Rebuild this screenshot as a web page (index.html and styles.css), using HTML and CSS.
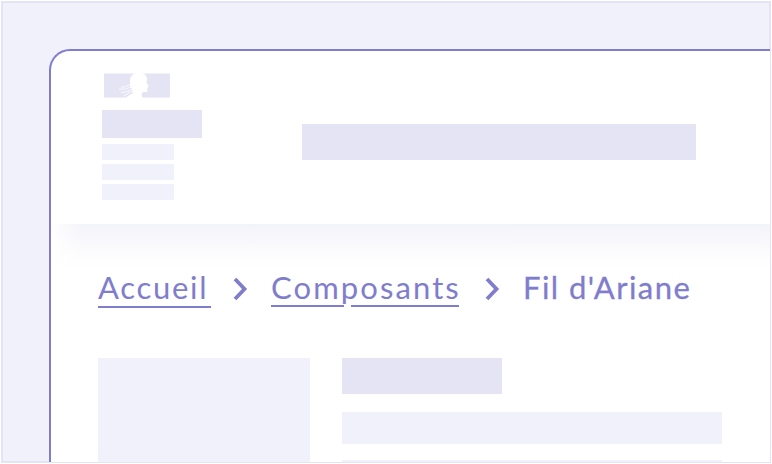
FILE: index.html
```html
<!DOCTYPE html>
<html lang="fr">
<head>
<meta charset="utf-8">
<title>Fil d'Ariane</title>
<link rel="stylesheet" href="styles.css">
</head>
<body>
<div class="frame">
  <main class="window">
    <header class="header">
      <div class="brand">
        <svg class="emblem" width="66" height="26" viewBox="0 0 66 26">
          <path class="flag" d="M0 1.500h66v24H0z"/>
          <path class="bust" d="M26 9C26 4 30 .5 35 .5c4 0 7.500 2.500 8 6l-.5 4 2.300 4-1.500 1 .2 3c-.2 2-2.500 1.200-4.500 1.500L37.500 22l.8 4H22l7-5-1-4-2-3z"/>
          <path class="hair" d="M28 13c-5-1-6 3-11 2M29 15c-5 0-7 3-14 2M29 17c-4 1-7 4-12 3M29 19c-4 1-6 3-9 5M31 21c-3 1-6 3-8 4"/>
        </svg>
        <div class="brand-title"></div>
        <div class="brand-line"></div>
        <div class="brand-line"></div>
        <div class="brand-line"></div>
      </div>
      <div class="service"></div>
    </header>
    <nav class="breadcrumb">
      <a class="crumb home">Accueil</a>
      <svg class="chevron" width="15" height="24" viewBox="0 0 15 24"><path d="M2 2l9.500 10L2 22"/></svg>
      <a class="crumb section">Composants</a>
      <svg class="chevron last" width="15" height="24" viewBox="0 0 15 24"><path d="M2 2l9.500 10L2 22"/></svg>
      <span class="crumb current">Fil d'Ariane</span>
    </nav>
    <div class="content">
      <div class="side"></div>
      <div class="article">
        <div class="heading"></div>
        <div class="line"></div>
        <div class="line"></div>
      </div>
    </div>
  </main>
</div>
</body>
</html>
```
FILE: styles.css
```css
* { box-sizing: border-box; }
body { margin: 0; background: #fff; }
.frame {
  width: 770px; height: 462px; margin: 1px;
  border: 2px solid #e5e4f5; border-bottom: 0;
  background: linear-gradient(#e5e4f5, #e5e4f5) bottom / 100% 2px no-repeat #f1f1fb;
  padding: 46px 0 0 46px;
}
.window {
  width: 721px; height: 413px;
  border: solid #7f7dcc; border-width: 2px 0 0 2px;
  border-radius: 21px 0 0 0;
  background: #fff; overflow: hidden;
}
.header {
  display: flex; height: 173px; padding: 21px 0 0 51px;
  margin-right: -30px;
}
.brand { width: 200px; }
.emblem { display: block; margin: 0 0 12px 2px; }
.flag { fill: #e5e4f5; }
.bust { fill: #fff; }
.hair { fill: none; stroke: #fff; stroke-width: .8; }
.brand-title { width: 100px; height: 28px; background: #e5e4f5; margin-bottom: 6px; }
.brand-line { width: 72px; height: 16px; background: #f1f1fb; margin-bottom: 4px; }
.service { width: 394px; height: 36px; margin-top: 52px; background: #e5e4f5; }
.breadcrumb {
  display: flex; align-items: flex-start; height: 134px; padding: 45px 0 0 47px;
  font: 400 31px/36px Lato, "Liberation Sans", sans-serif; color: #7f7dcc;
  background:
    linear-gradient(90deg, #fff, transparent 32px) 0 0 / 100% 45px no-repeat,
    linear-gradient(#f3f3fa, #f8f8fc 16px, #fdfdfe 32px, #fff 45px);
}
.crumb { flex: none; white-space: nowrap; }
.home { width: 113px; height: 39px; letter-spacing: 1.700px; border-bottom: 2px solid; }
.section {
  width: 188px; height: 38px; letter-spacing: 2.100px;
  background: linear-gradient(90deg, #7f7dcc 73px, transparent 73px 80px, #7f7dcc 80px) 0 100% / 100% 2px no-repeat;
}
.current { letter-spacing: 1.450px; -webkit-text-stroke: .3px #7f7dcc; }
.chevron { flex: none; margin: 8px 23px 0 22px; fill: none; stroke: #7f7dcc; stroke-width: 3.800; }
.chevron.last { margin-left: 26px; }
.content { display: flex; gap: 32px; margin-left: 47px; }
.side { width: 212px; height: 105px; background: #f1f1fb; }
.heading { width: 160px; height: 36px; margin-bottom: 18px; background: #e5e4f5; }
.line { width: 380px; height: 32px; margin-bottom: 16px; background: #f1f1fb; }
```
